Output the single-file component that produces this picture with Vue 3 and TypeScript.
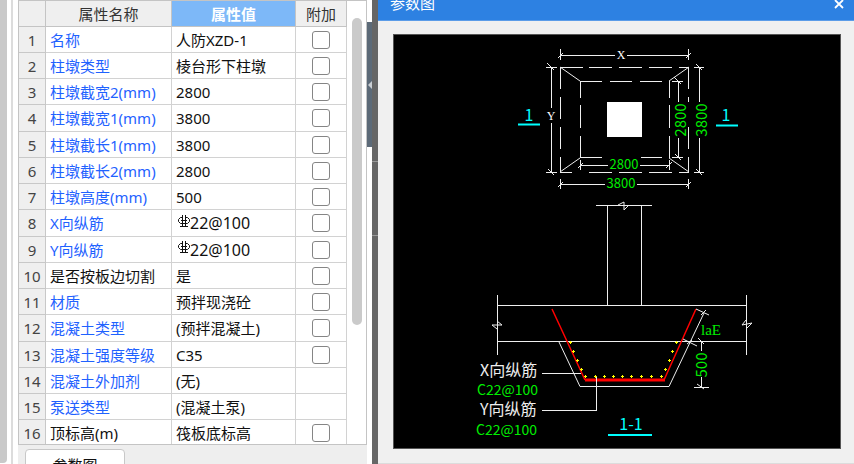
<script setup lang="ts">
import { ref } from 'vue'

interface Property {
  name: string
  value: string
  linked?: boolean
  rebar?: boolean
  extra?: boolean
}

const properties = ref<Property[]>([
  { name: '名称', value: '人防XZD-1', linked: true, extra: true },
  { name: '柱墩类型', value: '棱台形下柱墩', linked: true, extra: true },
  { name: '柱墩截宽2(mm)', value: '2800', linked: true, extra: true },
  { name: '柱墩截宽1(mm)', value: '3800', linked: true, extra: true },
  { name: '柱墩截长1(mm)', value: '3800', linked: true, extra: true },
  { name: '柱墩截长2(mm)', value: '2800', linked: true, extra: true },
  { name: '柱墩高度(mm)', value: '500', linked: true, extra: true },
  { name: 'X向纵筋', value: '22@100', linked: true, rebar: true, extra: true },
  { name: 'Y向纵筋', value: '22@100', linked: true, rebar: true, extra: true },
  { name: '是否按板边切割', value: '是', extra: true },
  { name: '材质', value: '预拌现浇砼', linked: true, extra: true },
  { name: '混凝土类型', value: '(预拌混凝土)', linked: true, extra: true },
  { name: '混凝土强度等级', value: 'C35', linked: true, extra: true },
  { name: '混凝土外加剂', value: '(无)', linked: true },
  { name: '泵送类型', value: '(混凝土泵)', linked: true },
  { name: '顶标高(m)', value: '筏板底标高', extra: true },
])

const checked = ref<boolean[]>(properties.value.map(() => false))

// Bar cross-sections in the 1-1 section
const bars: [number, number][] = [
  [570, 342], [573, 351], [577, 360], [581, 369],
  [585, 376], [595, 376], [604, 376], [613, 376], [622, 376],
  [631, 376], [641, 376], [651, 376], [661, 376],
  [665, 369], [669, 360], [672, 351], [676, 342],
]
</script>

<template>
  <main class="workspace">
    <section class="left">
      <div class="outer-scroll"><div class="outer-thumb"></div></div>
      <div class="divider"></div>
      <div class="panel">
        <div class="grid-area">
          <div class="table-wrap">
            <table class="props">
              <colgroup>
                <col class="c-index" />
                <col class="c-name" />
                <col />
                <col class="c-extra" />
              </colgroup>
              <thead>
                <tr>
                  <th></th>
                  <th>属性名称</th>
                  <th class="active">属性值</th>
                  <th>附加</th>
                </tr>
              </thead>
              <tbody>
                <tr v-for="(p, i) in properties" :key="i">
                  <td class="index">{{ i + 1 }}</td>
                  <td :class="{ linked: p.linked }">
                    <label :for="'extra-' + i">{{ p.name }}</label>
                  </td>
                  <td>
                    <span class="value" :class="{ spaced: p.rebar }">
                      <svg v-if="p.rebar" class="rebar" viewBox="0 0 12 13" width="12" height="13">
                        <path d="M4.500 2.500H2.500L0.500 4.500V6.500L2.500 8.500H9.500L11.500 6.500V4.500L9.500 2.500H7.500" />
                        <path d="M4.500 0V11M7.500 0V11M3 5.500H9M2 11.500H10" />
                      </svg>{{ p.value }}
                    </span>
                  </td>
                  <td class="extra">
                    <input v-if="p.extra" :id="'extra-' + i" v-model="checked[i]" type="checkbox" />
                  </td>
                </tr>
              </tbody>
            </table>
          </div>
          <div class="track"><div class="thumb"></div></div>
        </div>
        <footer class="tabs">
          <button type="button" class="tab">参数图</button>
        </footer>
      </div>
      <div class="rail">
        <button type="button" class="collapse" aria-label="收起">
          <svg viewBox="0 0 5 8" width="5" height="8"><path d="M5 0V8L1 4Z" fill="#c9ced3" /></svg>
        </button>
      </div>
      <div class="gap"></div>
    </section>

    <section class="dialog">
      <header class="title">
        <h1>参数图</h1>
        <button type="button" class="close" aria-label="关闭">
          <svg viewBox="0 0 10 10" width="10" height="10">
            <path d="M1 0L9 8M9 0L1 8" stroke="#fff" stroke-width="1.800" />
          </svg>
        </button>
      </header>
      <div class="canvas">
        <svg viewBox="394 35 446 413" class="drawing">
          <!-- plan: outlines -->
          <g class="line crisp">
            <path d="M560 67.500H583M589 67.500H612M619 67.500H642M649 67.500H672M679 67.500H689" />
            <path d="M560 172.500H572M589 172.500H612M619 172.500H642M649 172.500H672M679 172.500H689" />
            <path d="M560.500 68V89M560.500 97V119M560.500 127V149M560.500 157V173" />
            <path d="M688.500 68V89M688.500 97V102M688.500 127V149M688.500 157V173" />
            <path d="M580 81.500H602M610 81.500H632M640 81.500H662M580 157.500H602M641 157.500H662" />
            <path d="M580.500 81V98M580.500 105V128M580.500 136V158M669.500 81V98M669.500 105V128M669.500 136V158" />
          </g>
          <path class="line" d="M560 67L580 81M689 67L669 81M560 172L580 158M689 172L669 158" />
          <rect x="607" y="102" width="35" height="35" fill="#fff" />

          <!-- plan: dimensions -->
          <g class="line crisp">
            <path d="M560 55.500H615M627 55.500H689M560.500 49V60M688.500 49V60" />
            <path d="M551.500 67V108M551.500 123V173M546 67.500H557M546 172.500H557" />
            <path d="M678.500 81V102M678.500 138V158M672 81.500H683M672 157.500H683" />
            <path d="M699.500 67V102M699.500 138V173M694 67.500H704M694 172.500H704" />
            <path d="M580 165.500H608M640 165.500H669M580.500 160V170M669.500 160V170" />
            <path d="M560 184.500H605M637 184.500H689M560.500 179V189M688.500 179V189" />
          </g>
          <path
            class="line"
            d="M558 58L563 53M686 58L691 53M547 63L554 70M548 169L554 175M674 77L681 84M675 154L681 160M696 64L702 70M696 169L702 175M578 168L583 163M666 168L672 162M558 187L563 182M686 187L691 182"
          />
          <text class="axis" x="621" y="59">X</text>
          <text class="axis" x="551" y="120">Y</text>
          <text class="dim small" x="624" y="169">2800</text>
          <text class="dim small" x="621" y="188">3800</text>
          <text class="dim tall" transform="translate(686 120) rotate(-90)">2800</text>
          <text class="dim tall" transform="translate(707 120) rotate(-90)">3800</text>
          <text class="mark" x="529" y="121">1</text>
          <text class="mark" x="726" y="121">1</text>
          <path class="underline" d="M518 124.500H540M716 125.500H738" />

          <!-- section: column and slab -->
          <g class="line crisp">
            <path d="M596 205.500H652M607.500 205V305M641.500 205V305" />
            <path d="M497 305.500H746M497 341.500H746M497.500 295V355M746.500 295V355" />
          </g>
          <path class="line" d="M618 205L624 202V210L629 205" />
          <path class="line" d="M497 321L502 325H492L497 329M746 320L742 325L752 323L747 328" />

          <!-- section: pier -->
          <path class="line" d="M559 342L580 386.500H669L704 313" />
          <path class="steel" d="M552 309L585 380M664 380L696 309" />
          <path class="steel thick" d="M585 380H665" />
          <g fill="#ff0">
            <path
              v-for="([x, y], i) in bars"
              :key="i"
              :transform="`translate(${x} ${y})`"
              d="M-1 0H0V-1H1V0H2V1H1V2H0V1H-1Z"
            />
          </g>
          <path class="line" d="M696 309L709 315M701 315L706 310M683 339L697 346M687 344L692 340" />
          <path class="line" d="M698 338L704 344M697 384L704 389" />
          <path class="line crisp" d="M701.500 342V351M701.500 377V387M694 387.500H709" />
          <text class="lae" x="711" y="335">laE</text>
          <text class="dim tall" transform="translate(707 365) rotate(-90)">500</text>

          <!-- section: leaders and notes -->
          <path class="line crisp" d="M542 373.500H581M542 410.500H596.500V377" />
          <text class="note" x="480" y="376">X向纵筋</text>
          <text class="spec" x="477" y="395">C22@100</text>
          <text class="note" x="480" y="415">Y向纵筋</text>
          <text class="spec" x="476" y="435">C22@100</text>
          <text class="mark" x="631" y="430">1-1</text>
          <path class="underline" d="M608 435H652" />
        </svg>
      </div>
    </section>
  </main>
</template>

<style>
body {
  margin: 0;
  overflow: hidden;
}
</style>

<style scoped>
* {
  box-sizing: border-box;
}
.workspace {
  display: grid;
  grid-template-columns: minmax(0, 378fr) minmax(0, 476fr);
  height: 100vh;
  overflow: hidden;
  background: #fff;
  color: #111;
  font: 15px/20px "Noto Sans", "Noto Sans CJK SC", sans-serif;
}
.left {
  display: flex;
  min-width: 0;
  min-height: 0;
}
.outer-scroll {
  flex: 0 0 11px;
  padding-bottom: 1px;
}
.outer-thumb {
  width: 7px;
  height: 100%;
  background: #c9c9c9;
  border-radius: 0 0 4px 0;
}
.divider {
  flex: 0 0 7px;
  border-left: 2px solid #dcdcdc;
}
.panel {
  flex: 1;
  display: flex;
  flex-direction: column;
  min-width: 0;
}
.grid-area {
  flex: 1;
  display: flex;
  min-height: 0;
  overflow: hidden;
  border: 1px solid #c4c4c4;
}
.table-wrap {
  flex: 1;
  min-width: 0;
}
.props {
  width: 100%;
  table-layout: fixed;
  border-collapse: separate;
  border-spacing: 0;
}
.c-index {
  width: 27px;
}
.c-name {
  width: 126px;
}
.c-extra {
  width: 51px;
}
th,
td {
  height: 26px;
  padding: 0 0 0 4px;
  border-right: 1px solid #d2d2d2;
  border-bottom: 1px solid #d2d2d2;
  line-height: 20px;
  white-space: nowrap;
  overflow: hidden;
}
tbody tr:nth-child(4n) td {
  height: 27px;
}
th {
  padding: 0;
  background: #efefef;
  border-color: #c4c4c4;
  color: #333;
  font-weight: 400;
}
th.active {
  background: #7db8f8;
  color: #fff;
  font-weight: 700;
}
.index {
  padding: 0;
  background: #efefef;
  border-color: #c8c8c8;
  color: #444;
  text-align: center;
}
.linked {
  color: #1f62ff;
}
.value {
  display: flex;
  align-items: center;
}
.value.spaced {
  font-size: 16px;
}
.rebar {
  flex: none;
  margin: 0 0 4px 2px;
  fill: none;
  stroke: #111;
  stroke-width: 1;
}
.extra {
  padding: 0;
}
.extra input {
  display: block;
  appearance: none;
  width: 18px;
  height: 18px;
  margin: 0 auto;
  border: 1px solid #858585;
  border-radius: 3px;
  background: #fff;
}
.extra input:checked {
  background: #2d81e2;
}
.track {
  flex: 0 0 19px;
  padding: 17px 4px 0 5px;
}
.thumb {
  height: 72%;
  border-radius: 5px;
  background: #cacaca;
}
.tabs {
  flex: 0 0 19px;
  padding: 4px 7px 0;
  overflow: hidden;
  background: #eee;
}
.tab {
  width: 100px;
  height: 32px;
  padding: 0;
  border: 1px solid #c8c8c8;
  border-radius: 4px;
  background: #fff;
  color: #111;
  font: inherit;
}
.rail {
  flex: 0 0 5px;
  padding-top: 22px;
}
.collapse {
  display: flex;
  align-items: center;
  width: 100%;
  height: 125px;
  padding: 0;
  border: 0;
  background: #5c6a78;
}
.gap {
  flex: 0 0 6px;
  background: linear-gradient(
    #666 161px,
    #999 161px 162px,
    #666 162px 235px,
    #999 235px 236px,
    #666 236px
  );
}
.dialog {
  display: flex;
  flex-direction: column;
  min-width: 0;
  min-height: 0;
  background: #f0f0f0;
  border-bottom: 1px solid #dcdcdc;
}
.title {
  flex: none;
  display: flex;
  justify-content: space-between;
  align-items: flex-start;
  height: 21px;
  padding: 0 10px 0 12px;
  background: #2d81e2;
  border-bottom: 1px solid #5b9ce8;
  color: #fff;
}
.title h1 {
  margin: 0;
  font-size: 15px;
  font-weight: 400;
  line-height: 6px;
}
.close {
  display: flex;
  padding: 0;
  border: 0;
  background: none;
}
.canvas {
  flex: 1;
  min-height: 0;
  margin: 13px 13px 14px 15px;
  border: 1px solid #555;
  background: #000;
}
.drawing {
  display: block;
  width: 100%;
  height: 100%;
  font-family: "Noto Sans CJK SC", sans-serif;
}
.line {
  fill: none;
  stroke: #eee;
  stroke-width: 1;
}
.crisp {
  shape-rendering: crispEdges;
}
.steel {
  fill: none;
  stroke: #f00;
  stroke-width: 1.500;
}
.steel.thick {
  stroke-width: 3;
}
.underline {
  stroke: #0ff;
  stroke-width: 2;
}
.axis {
  fill: #fff;
  font-family: "Liberation Serif", serif;
  font-size: 12px;
  text-anchor: middle;
}
.dim {
  fill: #0e0;
  text-anchor: middle;
}
.small {
  font-size: 13px;
}
.tall {
  font-size: 15px;
}
.mark {
  fill: #0ff;
  font-size: 16px;
  text-anchor: middle;
}
.lae {
  fill: #0e0;
  font-family: "Liberation Serif", serif;
  font-size: 15px;
  text-anchor: middle;
}
.note {
  fill: #eee;
  font-size: 16px;
}
.spec {
  fill: #0e0;
  font-size: 14px;
}
</style>
